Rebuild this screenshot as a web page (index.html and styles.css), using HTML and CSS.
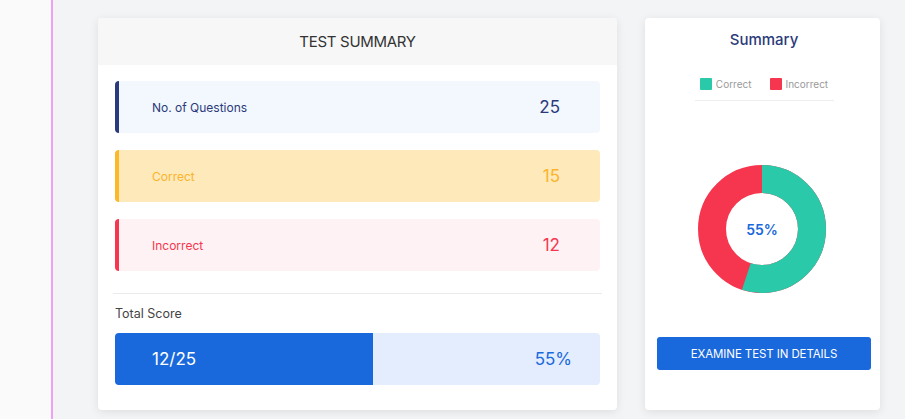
FILE: index.html
```html
<!DOCTYPE html>
<html>
<head>
<meta charset="utf-8">
<link rel="stylesheet" href="styles.css">
</head>
<body>
<div class="page">
  <aside class="sidebar"></aside>
  <main class="content">
    <section class="card test-card">
      <header class="card-head">TEST SUMMARY</header>
      <div class="card-body">
        <div class="stat stat-total"><span class="stat-label">No. of Questions</span><span class="stat-value">25</span></div>
        <div class="stat stat-correct"><span class="stat-label">Correct</span><span class="stat-value">15</span></div>
        <div class="stat stat-incorrect"><span class="stat-label">Incorrect</span><span class="stat-value">12</span></div>
        <hr class="divider">
        <div class="score-label">Total Score</div>
        <div class="score-bar">
          <div class="score-fill" style="width:53.2%"><span>12/25</span></div>
          <div class="score-rest"><span>55%</span></div>
        </div>
      </div>
    </section>
    <section class="card summary-card">
      <h2 class="summary-title">Summary</h2>
      <div class="legend">
        <span class="legend-item"><i class="swatch swatch-green"></i>Correct</span>
        <span class="legend-item"><i class="swatch swatch-red"></i>Incorrect</span>
      </div>
      <div class="donut">
        <svg width="128" height="128" viewBox="0 0 128 128">
          <circle cx="64" cy="64" r="50" fill="none" stroke="#f5364e" stroke-width="28"/>
          <circle cx="64" cy="64" r="50" fill="none" stroke="#29c9a9" stroke-width="28" stroke-dasharray="172.79 314.16" transform="rotate(-90 64 64)"/>
        </svg>
        <span class="donut-label">55%</span>
      </div>
      <button class="examine-btn">EXAMINE TEST IN DETAILS</button>
    </section>
  </main>
</div>
</body>
</html>
```
FILE: styles.css
```css
* { box-sizing: border-box; }
html, body { margin: 0; padding: 0; }
body {
  font-family: Inter, "Noto Sans", "Liberation Sans", sans-serif;
  width: 905px;
  height: 419px;
  overflow: hidden;
}
.page {
  display: flex;
  height: 419px;
}
.sidebar {
  width: 53px;
  background: #fafafa;
  border-right: 2px solid #eea2f1;
  flex: none;
}
.content {
  flex: 1;
  background: #f3f4f6;
  display: flex;
  align-items: flex-start;
  gap: 28px;
  padding: 18px 0 0 45px;
}
.card {
  background: #fff;
  border-radius: 4px;
  box-shadow: 0 2px 10px rgba(0, 0, 0, 0.09);
}
.test-card {
  width: 519px;
  height: 392px;
  overflow: hidden;
}
.card-head {
  height: 47px;
  background: #f7f7f7;
  display: flex;
  align-items: center;
  justify-content: center;
  font-size: 15px;
  font-weight: 400;
  color: #333;
  letter-spacing: -0.3px;
}
.card-body {
  padding: 16px 17px 0 17px;
}
.stat {
  height: 52px;
  border-radius: 4px;
  border-left: 4px solid;
  display: flex;
  align-items: center;
  justify-content: space-between;
  padding: 0 40px 0 33px;
  margin-bottom: 17px;
}
.stat-label { font-size: 12px; }
.stat-value { font-size: 17px; }
.stat-total { background: #f3f7fe; border-color: #2b3a7a; color: #2b3a7a; }
.stat-correct { background: #fee9bb; border-color: #fbb829; color: #fbb42b; }
.stat-incorrect { background: #fef2f4; border-color: #f5364e; color: #f5364e; }
.stat-incorrect { margin-bottom: 0; }
.divider {
  border: none;
  border-top: 1px solid #ebebeb;
  margin: 22px -2px 0 -2px;
}
.score-label {
  font-size: 12.5px;
  color: #444;
  margin-top: 12px;
  height: 27px;
}
.score-bar {
  height: 52px;
  border-radius: 4px;
  background: #e3edfd;
  display: flex;
  overflow: hidden;
}
.score-fill {
  background: #1a69dc;
  color: #fff;
  font-size: 17px;
  display: flex;
  align-items: center;
  padding-left: 37px;
}
.score-rest {
  flex: 1;
  display: flex;
  align-items: center;
  justify-content: flex-end;
  padding-right: 28px;
  color: #1a69dc;
  font-size: 17px;
}
.summary-card {
  width: 235px;
  height: 392px;
  display: flex;
  flex-direction: column;
  align-items: center;
  padding: 12px 9px 0 12px;
}
.summary-title {
  margin: 0;
  font-size: 15px;
  font-weight: 500;
  color: #2b3a7a;
  line-height: 20px;
}
.legend {
  margin-top: 28px;
  width: 139px;
  display: flex;
  justify-content: center;
  gap: 18px;
  padding-bottom: 10px;
  border-bottom: 1px solid #eeeeee;
}
.legend-item {
  display: flex;
  align-items: center;
  gap: 4px;
  font-size: 10px;
  color: #999;
}
.swatch {
  display: block;
  width: 12px;
  height: 12px;
  border-radius: 1px;
}
.swatch-green { background: #29c9a9; }
.swatch-red { background: #f5364e; }
.donut {
  position: relative;
  width: 128px;
  height: 128px;
  margin-top: 64px;
  margin-right: 4px;
}
.donut svg { display: block; }
.donut-label {
  position: absolute;
  inset: 0;
  display: flex;
  align-items: center;
  justify-content: center;
  font-size: 14px;
  font-weight: 600;
  color: #1a69dc;
}
.examine-btn {
  margin-top: 44px;
  width: 214px;
  height: 33px;
  border: none;
  border-radius: 3px;
  background: #1a69dc;
  color: #fff;
  font-family: inherit;
  font-size: 11.5px;
  letter-spacing: -0.1px;
}
```
